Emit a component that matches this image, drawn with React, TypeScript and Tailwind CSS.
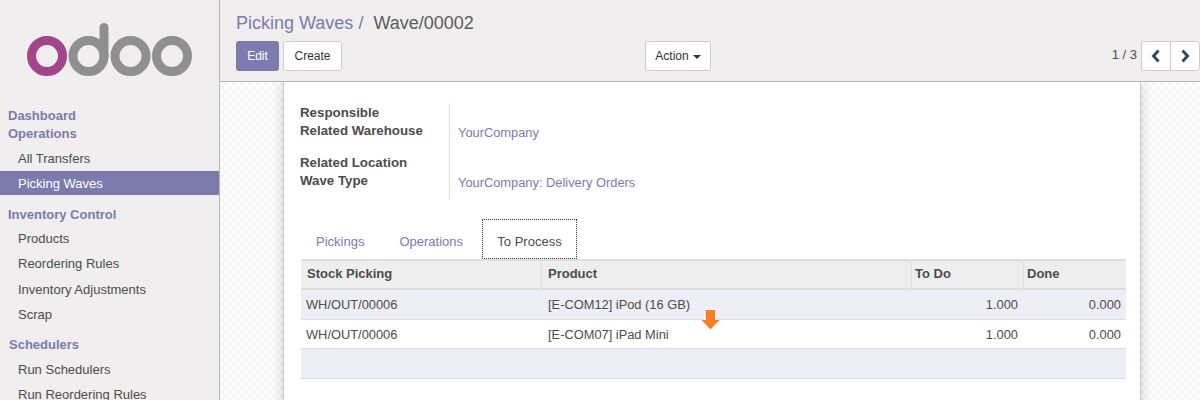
const font = "font-['Liberation_Sans',Arial,sans-serif]";

function Logo() {
  return (
    <svg width="219" height="81" viewBox="0 0 219 81" className="block">
      <circle cx="47" cy="56" r="15.5" fill="none" stroke="#a24689" strokeWidth="9" />
      <g fill="none" stroke="#8f8f8f" strokeWidth="9">
        <circle cx="88.5" cy="56" r="15.5" />
        <path d="M104 56V27.5" strokeLinecap="round" />
        <circle cx="130.5" cy="56" r="15.5" />
        <circle cx="172" cy="56" r="15.5" />
      </g>
    </svg>
  );
}

function MenuHead({ children, className }: { children: string; className: string }) {
  return <div className={"pl-2 text-[13px] font-bold leading-[18px] text-[#7c7bad] " + className}>{children}</div>;
}

function MenuItem({ children, active, className }: { children: string; active?: boolean; className: string }) {
  return (
    <div
      className={
        "h-6 pl-[18px] pt-[1px] text-[13px] leading-6 " +
        (active ? "bg-[#7c7bad] text-white " : "text-[#4c4c4c] ") +
        className
      }
    >
      {children}
    </div>
  );
}

function Sidebar() {
  return (
    <aside className="h-[400px] w-[220px] shrink-0 overflow-hidden border-r border-[#b5b5b5] bg-[#f0eeee]">
      <Logo />
      <div className="pt-[26px]">
        <MenuHead className="">Dashboard</MenuHead>
        <MenuHead className="">Operations</MenuHead>
        <MenuItem className="mt-[3px]">All Transfers</MenuItem>
        <MenuItem active className="mt-[1px]">Picking Waves</MenuItem>
        <MenuHead className="mt-[11px]">Inventory Control</MenuHead>
        <MenuItem className="mt-[2px]">Products</MenuItem>
        <MenuItem className="mt-[1px]">Reordering Rules</MenuItem>
        <MenuItem className="mt-[2px]">Inventory Adjustments</MenuItem>
        <MenuItem className="mt-[1px]">Scrap</MenuItem>
        <MenuHead className="mt-[10px] pl-[9px]">Schedulers</MenuHead>
        <MenuItem className="mt-[3px]">Run Schedulers</MenuItem>
        <MenuItem className="mt-[1px]">Run Reordering Rules</MenuItem>
      </div>
    </aside>
  );
}

function Header() {
  return (
    <header className="h-[82px] border-b border-[#b5b5b5] bg-[#f0eeee] pl-4">
      <div className="h-[41px] pt-[11px] text-lg leading-6 text-[#5c5c5c]">
        <span className="text-[#7c7bad]">Picking Waves</span>
        <span className="text-[#7c7bad]"> / </span>
        <span className="pl-[5px]">Wave/00002</span>
      </div>
      <div className="flex h-[30px] items-stretch text-xs">
        <button className="w-[43px] rounded-[3px] bg-[#7c7bad] text-white">Edit</button>
        <button className="ml-1 w-[59px] rounded-[3px] border border-[#ccc] bg-white text-[#333]">Create</button>
        <button className="ml-[303px] flex w-[66px] items-center justify-center gap-1 rounded-[3px] border border-[#ccc] bg-white text-[#333]">
          Action
          <span className="mt-[2px] border-x-4 border-t-4 border-x-transparent border-t-[#333]" />
        </button>
        <div className="ml-auto flex items-center pr-1 pb-[2px] text-[13px] text-[#4c4c4c]">1 / 3</div>
        <div className="flex w-[59px] rounded-[3px] border border-[#ccc] bg-white text-[#34495e]">
          <span className="flex w-[29px] items-center justify-center border-r border-[#ccc]">
            <svg width="10" height="14" viewBox="0 0 10 14">
              <path d="M7.500 1.500 2.500 7l5 5.500" fill="none" stroke="currentColor" strokeWidth="3" />
            </svg>
          </span>
          <span className="flex flex-1 items-center justify-center">
            <svg width="10" height="14" viewBox="0 0 10 14">
              <path d="M2.500 1.500 7.500 7l-5 5.500" fill="none" stroke="currentColor" strokeWidth="3" />
            </svg>
          </span>
        </div>
      </div>
    </header>
  );
}

function Field({ label, value, className }: { label: string[]; value: string; className: string }) {
  return (
    <div className={"flex " + className}>
      <div className="w-[149px] pt-[1px] text-[13.3px] font-bold leading-[18px] text-[#4c4c4c]">
        {label.map((l) => (
          <div key={l}>{l}</div>
        ))}
      </div>
      <div className="border-l border-[#ddd] pl-2 pt-[21px] text-[12.85px] leading-[18px] text-[#7c7bad]">{value}</div>
    </div>
  );
}

const rows = [
  { picking: "WH/OUT/00006", product: "[E-COM12] iPod (16 GB)", bg: "h-[30px] bg-[#eeeef6]", pad: "" },
  { picking: "WH/OUT/00006", product: "[E-COM07] iPad Mini", bg: "h-[29px] bg-white", pad: "pt-[2px] " },
];

function Lines() {
  return (
    <div className="relative ml-[1px]">
      <table className="w-[825px] table-fixed border-collapse text-[12.85px] text-[#4c4c4c]">
        <colgroup>
          <col className="w-[240px]" />
          <col className="w-[370px]" />
          <col className="w-[112px]" />
          <col />
        </colgroup>
        <thead>
          <tr className="h-[29px] border-y-2 border-t-[#ddd] border-b-[#ddd] bg-[#eee] text-left text-[13px] font-bold">
            <th className="px-[6px] pb-[1px]">Stock Picking</th>
            <th className="border-l-2 border-[#e4e4e4] px-[6px] pb-[1px]">Product</th>
            <th className="border-l-2 border-[#e4e4e4] px-[3px] pb-[1px]">To Do</th>
            <th className="border-l-2 border-[#e4e4e4] px-[3px] pb-[1px]">Done</th>
          </tr>
        </thead>
        <tbody>
          {rows.map((r) => (
            <tr key={r.product} className={"border-b border-[#ddd] " + r.bg}>
              <td className={r.pad + "px-[5px]"}>{r.picking}</td>
              <td className={r.pad + "px-[7px]"}>{r.product}</td>
              <td className={r.pad + "pr-[5px] text-right"}>1.000</td>
              <td className={r.pad + "pr-[5px] text-right"}>0.000</td>
            </tr>
          ))}
          <tr className="h-[30px] border-b border-[#ddd] bg-[#eeeef6]">
            <td colSpan={4} />
          </tr>
        </tbody>
      </table>
      <svg width="19" height="21" viewBox="0 0 19 21" className="absolute left-[400px] top-[50px]">
        <rect x="3.500" y="0" width="11" height="11" fill="#fff" />
        <path d="M4.500 1h9.500v10h4.500l-9 9.500-9-9.500h4.500z" fill="#fa7f24" />
      </svg>
    </div>
  );
}

export default function App() {
  return (
    <div className={"flex h-[400px] w-[1200px] overflow-hidden bg-white " + font}>
      <Sidebar />
      <main className="flex min-w-0 flex-1 flex-col">
        <Header />
        <div className="flex-1 overflow-hidden bg-[repeating-conic-gradient(#f6f6f6_0_25%,#fff_0_50%)] bg-[length:8px_8px] pl-[63px]">
          <div className="h-[330px] w-[858px] border-x border-[#c8c8d0] bg-white pl-4 pt-[21px] shadow-[0_0_12px_rgba(0,0,0,0.18)]">
            <Field className="h-[50px]" label={["Responsible", "Related Warehouse"]} value="YourCompany" />
            <Field className="h-[47px]" label={["Related Location", "Wave Type"]} value="YourCompany: Delivery Orders" />
            <div className="mt-[19px] flex h-10 pl-[1px] text-[13px]">
              <div className="pl-[15px] pr-[16px] pt-[13px] text-[#7c7bad]">Pickings</div>
              <div className="pl-[19px] pr-[19px] pt-[13px] text-[#7c7bad]">Operations</div>
              <div className="w-[95px] border border-dotted border-[#333] pt-3 text-center text-[#4c4c4c]">To Process</div>
            </div>
            <Lines />
          </div>
        </div>
      </main>
    </div>
  );
}
